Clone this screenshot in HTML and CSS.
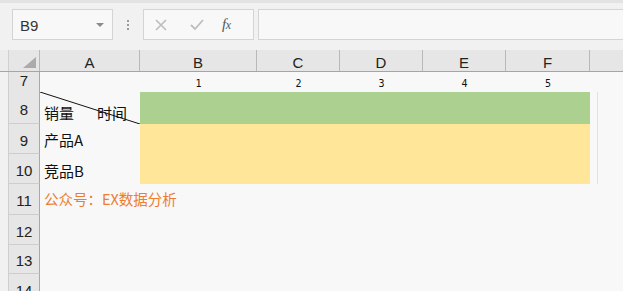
FILE: index.html
```html
<!DOCTYPE html>
<html>
<head>
<meta charset="utf-8">
<link rel="stylesheet" href="styles.css">
</head>
<body>
<div class="app">
  <div class="stripe"></div>
  <div class="toolbar">
    <div class="namebox"><span class="ref">B9</span><span class="drop"></span></div>
    <div class="grip"><i></i><i></i><i></i></div>
    <div class="fxbox">
      <svg class="ico" width="14" height="14" viewBox="0 0 14 14"><path d="M2 2 L12 12 M12 2 L2 12" stroke="#bdbdbd" stroke-width="1.6" fill="none"/></svg>
      <svg class="ico" width="16" height="14" viewBox="0 0 16 14"><path d="M2 7 L6 11 L14 2" stroke="#bdbdbd" stroke-width="1.8" fill="none"/></svg>
      <span class="fx">f<span class="fxx">x</span></span>
    </div>
    <div class="formula"></div>
  </div>

  <div class="sheet">
    <div class="row hdr">
      <div class="edge"></div>
      <div class="corner"><span class="tri"></span></div>
      <div class="ch">A</div><div class="ch">B</div><div class="ch">C</div><div class="ch">D</div><div class="ch">E</div><div class="ch">F</div>
      <div class="ch last"></div>
    </div>
    <div class="row r7">
      <div class="edge"></div><div class="rh">7</div>
      <div class="c"></div>
      <div class="c num">1</div><div class="c num">2</div><div class="c num">3</div><div class="c num">4</div><div class="c num">5</div>
      <div class="c"></div>
    </div>
    <div class="row r8">
      <div class="edge"></div><div class="rh">8</div>
      <div class="c txt diagcell">
        <svg class="diag" width="100" height="32" viewBox="0 0 100 32"><line x1="0" y1="0" x2="100" y2="32" stroke="#111" stroke-width="1"/></svg>
        <span>销量</span><span class="time">时间</span>
      </div>
      <div class="fill green"></div>
      <div class="c gcol"><span class="vline"></span></div>
    </div>
    <div class="row r9">
      <div class="edge"></div><div class="rh">9</div>
      <div class="c txt">产品A</div>
      <div class="fill yellow"></div>
      <div class="c gcol"><span class="vline"></span></div>
    </div>
    <div class="row r10">
      <div class="edge"></div><div class="rh">10</div>
      <div class="c txt">竞品B</div>
      <div class="fill yellow"></div>
      <div class="c gcol"><span class="vline"></span></div>
    </div>
    <div class="row r11">
      <div class="edge"></div><div class="rh">11</div>
      <div class="c txt orange">公众号：EX数据分析</div>
    </div>
    <div class="row r12">
      <div class="edge"></div><div class="rh">12</div>
    </div>
    <div class="row r13">
      <div class="edge"></div><div class="rh">13</div>
    </div>
    <div class="row r14">
      <div class="edge"></div><div class="rh">14</div>
    </div>
  </div>
</div>
</body>
</html>
```

FILE: styles.css
```css
html, body {
  margin: 0;
  padding: 0;
}
body {
  width: 623px;
  height: 291px;
  overflow: hidden;
  background: #f1f1f1;
  font-family: "Liberation Sans", Arial, sans-serif;
}
.app {
  width: 623px;
  height: 291px;
  overflow: hidden;
}
.stripe {
  height: 3px;
  background: #e3e3e3;
}
.toolbar {
  display: flex;
  align-items: stretch;
  height: 31px;
  margin-top: 6px;
  padding-left: 12px;
}
.namebox {
  width: 101px;
  box-sizing: border-box;
  border: 1px solid #d4d4d4;
  background: #f8f8f8;
  display: flex;
  align-items: center;
  justify-content: space-between;
  padding: 0 8px 0 7px;
}
.ref {
  font-size: 15px;
  color: #333;
  margin-top: 2px;
}
.drop {
  width: 0;
  height: 0;
  border-left: 4px solid transparent;
  border-right: 4px solid transparent;
  border-top: 4px solid #8a8a8a;
  margin-top: 1px;
}
.grip {
  width: 30px;
  display: flex;
  flex-direction: column;
  align-items: center;
  justify-content: center;
  gap: 2px;
}
.grip i {
  width: 2px;
  height: 2px;
  background: #9a9a9a;
}
.fxbox {
  width: 111px;
  box-sizing: border-box;
  border: 1px solid #d4d4d4;
  background: #f8f8f8;
  display: flex;
  align-items: center;
  padding-left: 10px;
}
.ico {
  display: block;
}
.ico:first-child {
  margin-right: 21px;
}
.fx {
  margin-left: 17px;
  font-family: "Liberation Serif", serif;
  font-style: italic;
  font-size: 15px;
  color: #555;
  line-height: 1;
  letter-spacing: -0.5px;
}
.fxx {
  font-size: 12px;
}
.formula {
  flex: 1;
  margin-left: 4px;
  box-sizing: border-box;
  border: 1px solid #d4d4d4;
  border-right: none;
  background: #f8f8f8;
}

.sheet {
  margin-top: 10px;
}
.row {
  display: grid;
  grid-template-columns: 8px 32px 100px 117px 83px 83px 83px 84px 1fr;
  background: #f8f8f8;
}
.row.hdr {
  height: 22px;
  background: #e6e6e6;
  border-bottom: 1px solid #a5a5a5;
  box-sizing: border-box;
}
.r7 { height: 20px; }
.r8 { height: 32px; }
.r9 { height: 30px; }
.r10 { height: 30px; }
.r11 { height: 31px; }
.r12 { height: 30px; }
.r13 { height: 29px; }
.r14 { height: 30px; }

.edge {
  background: #f1f1f1;
}
.hdr .edge {
  background: #ececec;
}
.corner {
  position: relative;
  border-right: 1px solid #b9b9b9;
  border-left: 1px solid #d0d0d0;
}
.tri {
  position: absolute;
  right: 3px;
  bottom: 3px;
  width: 0;
  height: 0;
  border-left: 13px solid transparent;
  border-bottom: 11px solid #ababab;
}
.ch {
  border-right: 1px solid #b9b9b9;
  display: flex;
  align-items: center;
  justify-content: center;
  font-size: 15px;
  color: #222;
  padding-top: 3px;
}
.ch.last {
  border-right: none;
}
.rh {
  background: #e6e6e6;
  border-left: 1px solid #cfcfcf;
  border-right: 1px solid #a8a8a8;
  border-bottom: 1px solid #cdcdcd;
  box-sizing: border-box;
  display: flex;
  align-items: center;
  justify-content: center;
  font-size: 15px;
  color: #222;
  padding-top: 3px;
}
.r7 .rh {
  align-items: flex-start;
  padding-top: 0;
  line-height: 18px;
}
.c {
  min-width: 0;
}
.num {
  display: flex;
  justify-content: center;
  align-items: flex-start;
  font-family: "DejaVu Sans Mono", "Liberation Mono", monospace;
  font-size: 10px;
  line-height: 20px;
  padding-top: 2px;
  color: #111;
}
.txt {
  display: flex;
  align-items: flex-end;
  padding: 0 0 5px 4px;
  font-family: "Noto Sans CJK SC", "Liberation Sans", sans-serif;
  font-size: 15px;
  line-height: 18px;
  color: #111;
  white-space: nowrap;
}
.r8 .txt {
  padding-bottom: 2px;
}
.r10 .txt {
  padding-bottom: 4px;
}
.diagcell {
  position: relative;
}
.diag {
  position: absolute;
  left: 0;
  top: 0;
}
.time {
  margin-left: 23px;
}
.orange {
  color: #ed7d31;
  font-size: 14.5px;
  padding-bottom: 7px;
  overflow: visible;
}
.fill {
  grid-column: span 5;
}
.green {
  background: #acd08f;
}
.yellow {
  background: #ffe699;
}
.gcol {
  position: relative;
}
.vline {
  position: absolute;
  left: 7px;
  top: 0;
  bottom: 0;
  border-left: 1px solid #e2e2e2;
}
```
